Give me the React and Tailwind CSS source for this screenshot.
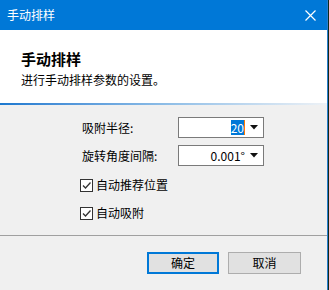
import React from "react";

const font = { fontFamily: '"Noto Sans CJK SC", "Noto Sans", sans-serif' };

const Arrow = () => (
  <svg width="8" height="5" viewBox="0 0 8 5">
    <path d="M0 0 H8 L4 4.5 Z" fill="#111" />
  </svg>
);

const Check = () => (
  <span className="w-[13px] h-[13px] border border-[#333] bg-white flex items-center justify-center">
    <svg width="11" height="11" viewBox="0 0 11 11">
      <path d="M2 5.5 L4.5 8 L9.5 2.5" fill="none" stroke="#333" strokeWidth="1.3" />
    </svg>
  </span>
);

const App = () => {
  return (
    <div className="flex w-[329px] h-[290px] overflow-hidden text-[12px] text-black" style={font}>
      <div className="w-[327px] flex flex-col bg-[#f0f0f0]">
        <div className="h-[30px] bg-[#0078d7] flex items-center justify-between pl-[7px] pr-[11px] text-white">
          <span className="leading-none">手动排样</span>
          <svg width="11" height="11" viewBox="0 0 11 11">
            <path d="M0.5 0.5 L10.5 10.5 M10.5 0.5 L0.5 10.5" stroke="#fff" strokeWidth="1.2" />
          </svg>
        </div>

        <div className="h-[73px] bg-white pl-[21px] pt-[19px]">
          <div className="text-[15px] font-bold leading-[20px]">手动排样</div>
          <div className="leading-[16px] mt-[3px]">进行手动排样参数的设置。</div>
        </div>
        <div className="h-[2px] bg-gradient-to-r from-[#1a78cf] via-[#8cbce6] to-[#eef2f6]"></div>

        <div className="h-[130px] pt-[12px] pl-[82px] flex flex-col">
          <div className="flex items-center h-[21px]">
            <span className="w-[96px]">吸附半径:</span>
            <div className="w-[86px] h-[21px] border border-[#7a7a7a] bg-white flex">
              <div className="flex-1 flex items-center justify-end">
                <span className="bg-[#0078d7] text-white leading-[15px]">20</span>
                <span className="w-[1px] h-[15px] bg-[#ff7a00]"></span>
              </div>
              <div className="w-[18px] flex items-center justify-center">
                <Arrow />
              </div>
            </div>
          </div>
          <div className="flex items-center h-[21px] mt-[7px]">
            <span className="w-[96px]">旋转角度间隔:</span>
            <div className="w-[86px] h-[21px] border border-[#7a7a7a] bg-white flex">
              <div className="flex-1 flex items-center justify-end">0.001°</div>
              <div className="w-[18px] flex items-center justify-center">
                <Arrow />
              </div>
            </div>
          </div>
          <div className="flex items-center h-[20px] mt-[9px] -ml-[2px] gap-[3px]">
            <Check />
            <span>自动推荐位置</span>
          </div>
          <div className="flex items-center h-[20px] mt-[8px] -ml-[2px] gap-[3px]">
            <Check />
            <span>自动吸附</span>
          </div>
        </div>

        <div className="h-[1px] bg-[#a0a0a0]"></div>

        <div className="flex justify-end pr-[26px] pt-[16px] gap-[9px]">
          <button className="w-[72px] h-[22px] border-2 border-[#0078d7] bg-[#e1e1e1] flex items-center justify-center">确定</button>
          <button className="w-[73px] h-[22px] border border-[#adadad] bg-[#e1e1e1] flex items-center justify-center">取消</button>
        </div>
      </div>
      <div className="w-[1px] bg-[#2b7fd0]"></div>
      <div className="flex-1 bg-[#0d2a1c]"></div>
    </div>
  );
};

export default App;
